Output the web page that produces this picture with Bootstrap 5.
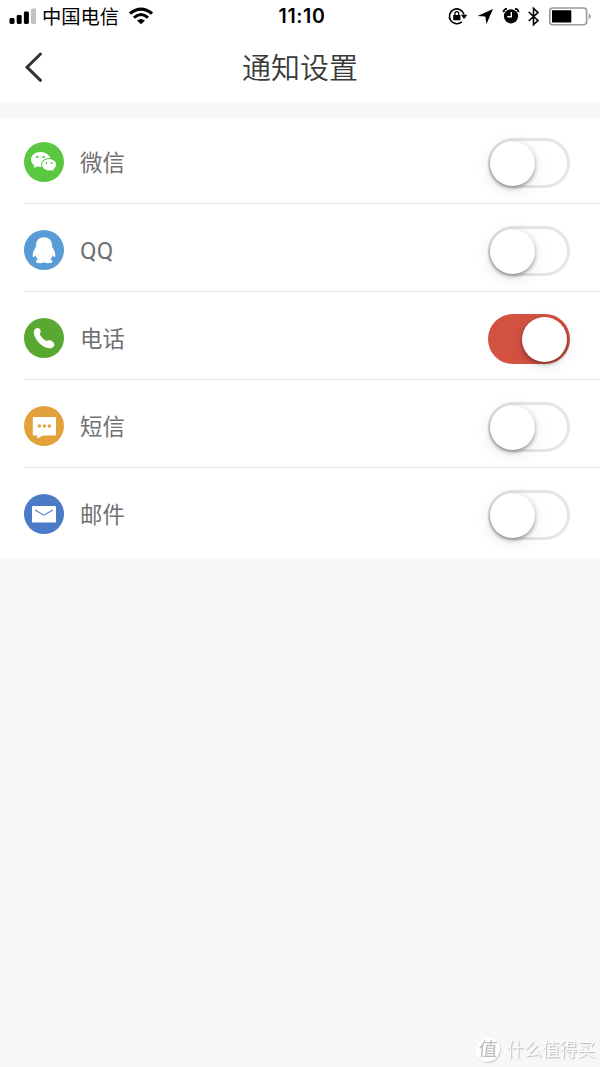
<!DOCTYPE html>
<html lang="zh-CN">
<head>
<meta charset="utf-8">
<meta name="viewport" content="width=device-width, initial-scale=1">
<title>通知设置</title>
<link href="https://cdn.jsdelivr.net/npm/bootstrap@5.3.0/dist/css/bootstrap.min.css" rel="stylesheet">
<style>
body{background:#f7f7f7;font-family:"Liberation Sans","Noto Sans CJK SC",sans-serif;color:#666}
svg{display:block;flex:none}
.status{height:33px;color:#000;padding:0 9px}
.carrier{font-size:19.3px;line-height:33px;margin-left:6px;padding-top:1px}
.clock{font:600 19.5px/33px Inter,sans-serif;letter-spacing:.6px;margin-left:4px}
.side{flex:1 1 0}
.title-bar{height:69px;color:#3a3a3a}
.title-bar h1{font-size:29px;line-height:72px;font-weight:350}
.settings{margin-top:16px}
.setting{height:88px;margin-left:24px;padding:26px 30px 0 0;border-bottom:1px solid #e4e4e4}
.setting:first-child{height:86px;padding-top:24px}
.setting:last-child{height:90px;border:0}
.setting-name{font-size:22.4px;line-height:44px;margin-left:16px;color:#707070}
.latin{font-family:Roboto,sans-serif;font-size:24px;line-height:42px;letter-spacing:.2px}
.switch{width:82px;height:50px;border:3px solid #e5e5e5;border-radius:25px;margin-top:-4px;padding:0;background:#fff;display:flex;align-items:center;flex:none}
.knob{width:45px;height:45px;border-radius:50%;background:#fff;margin-left:-1px;flex:none;box-shadow:0 2px 4px rgba(0,0,0,.38),0 4px 18px rgba(0,0,0,.09)}
.switch.on{background:#d45242;border-color:#d45242}
.on .knob{margin-left:31px}
.brand-mark{right:5px;bottom:4px;color:#fbfbfb;font-size:17.7px;line-height:26px;text-shadow:1px 1px 1px #bbb}
.brand-mark .seal{width:24px;height:24px;border-radius:50%;background:#fff;color:#bbb;font-size:19px;line-height:23px;box-shadow:1px 1px 1px #ccc;text-shadow:none;margin-right:7px;transform:skewX(-5deg)}
</style>
</head>
<body>
<header class="bg-white">
  <div class="status d-flex align-items-center">
    <div class="side d-flex align-items-center">
      <svg width="27" height="33"><rect x=".5" y="18" width="5" height="6" rx="1.400"/><rect x="7.700" y="15" width="5" height="9" rx="1.400"/><rect x="14.900" y="11.500" width="5" height="12.500" rx="1.400"/><rect x="22" y="8.500" width="5" height="15.500" rx="1.400" fill="#c2c2c2"/></svg>
      <span class="carrier">中国电信</span>
      <svg width="24" height="33" viewBox="0 0 24 33" style="margin-left:10px"><path d="M1 13.600Q12 4.500 23 13.600" fill="none" stroke="#000" stroke-width="3.200"/><path d="M4.900 17.700Q12 11.500 19.100 17.700" fill="none" stroke="#000" stroke-width="2.900"/><path d="M8 20.500Q12 17.500 16 20.500L12 24.300Z"/></svg>
    </div>
    <span class="clock">11:10</span>
    <div class="side d-flex justify-content-end">
      <svg width="144" height="33" viewBox="447 0 144 33">
        <path d="M464 14.500A7.400 7.400 0 1 0 461.800 21.800" fill="none" stroke="#000" stroke-width="1.600"/><path d="M460.900 14.700h6.400l-3.200 4.300z"/><rect x="453.200" y="15" width="7.200" height="5.200" rx=".5"/><path d="M454.900 15.500v-2a1.900 1.900 0 0 1 3.800 0v2" fill="none" stroke="#000" stroke-width="1.300"/>
        <path d="M493 9l-6.500 15-1.200-7.600-7.800-.5z"/>
        <circle cx="511" cy="16.300" r="7.100"/><path d="M503.500 12.200q.2-3 3.500-3.500M518.500 12.200q-.2-3-3.500-3.500" fill="none" stroke="#000" stroke-width="1.800"/><path d="M511.300 12v4.800H507.300" fill="none" stroke="#fff" stroke-width="1.400"/>
        <path d="M528.700 12l9.300 8.500-4.500 4.200V8.300l4.500 4.200-9.300 8.500" fill="none" stroke="#000" stroke-width="1.600"/>
        <rect x="549.800" y="8" width="36.800" height="16.800" rx="3" fill="#fff" stroke="#999" stroke-width="1.600"/><rect x="552" y="10.300" width="19.300" height="12.200" rx=".6"/><path d="M588.700 13.500q2 .7 2 2.800t-2 2.800z" fill="#999"/>
      </svg>
    </div>
  </div>
  <div class="title-bar position-relative text-center">
    <svg class="position-absolute top-0 start-0" width="60" height="69" viewBox="0 33 60 69"><path d="M40.500 54L27 67.200 40.500 80.300" fill="none" stroke="#333" stroke-width="3" stroke-linecap="round"/></svg>
    <h1 class="m-0">通知设置</h1>
  </div>
</header>
<main class="settings bg-white">
  <div class="setting d-flex align-items-start">
    <svg width="40" height="40"><circle cx="20" cy="20" r="20" fill="#5ac740"/><path d="M16.300 10c-5.300 0-9.300 3.400-9.300 7.600 0 2.500 1.300 4.500 3.400 5.900L9.700 26l3.400-1.500q3.400 1 7-.1l7-6.500c-.8-4.700-5.500-7.900-10.800-7.900z" fill="#fff"/><path d="M25 16.500c-4.200 0-7.500 2.800-7.500 6.300s3.300 6.300 7.500 6.300q1.300 0 2.500-.4l3.200 1.600-.8-2.900c1.700-1.200 2.800-2.800 2.800-4.600 0-3.500-3.400-6.300-7.700-6.300z" fill="#fff" stroke="#5ac740" stroke-width="1.100" paint-order="normal"/><g fill="#5ac740"><circle cx="13.200" cy="14.900" r="1.200"/><circle cx="19.600" cy="14.900" r="1.200"/><circle cx="22.400" cy="21" r="1"/><circle cx="27.600" cy="21" r="1"/></g></svg>
    <span class="setting-name me-auto">微信</span><button type="button" class="switch" role="switch" aria-checked="false" aria-label="微信"><span class="knob"></span></button>
  </div>
  <div class="setting d-flex align-items-start">
    <svg width="40" height="40"><circle cx="20" cy="20" r="20" fill="#599cd5"/><path d="M20 7.200c-5.200 0-8 3.600-7.900 8.100l-.5 2.200c-2.100 3-3.200 6-2.700 9.200.7 1 1.800-.3 2.600-1.500.4 1.700 1.200 3 2.300 4.200-2.500 1-2.900 3.300.2 3.700 2.500.3 5 0 5.600-.8h1c.8 1 3.500 1.100 5.800.8 2.900-.4 2.600-2.700 0-3.700 1.100-1.200 1.800-2.500 2.200-4.200 1 1.300 2 2.500 2.600 1.500.5-3.200-.7-6.400-2.800-9.200l-.4-2.200C28 10.800 25.200 7.200 20 7.200z" fill="#fff"/></svg>
    <span class="setting-name latin me-auto">QQ</span><button type="button" class="switch" role="switch" aria-checked="false" aria-label="QQ"><span class="knob"></span></button>
  </div>
  <div class="setting d-flex align-items-start">
    <svg width="40" height="40"><circle cx="20" cy="20" r="20" fill="#58a832"/><path d="M13.400 10c2.600-.1 3.400 1.700 3.200 3.900-.1 1.400-1.100 1.900-.4 3.100 1.200 2.400 3.500 4.600 6 5.800 1.200.4 1.700-.8 3-.6 2.300.2 4.400 1.600 5.100 3.900.4 1.400-.7 2.900-2.200 3.600-2.800 1.300-6.300.2-9.800-2.200-4-2.800-7.300-7.200-8.300-11.600-.6-2.800.5-5.500 3.400-5.900z" fill="#fff"/></svg>
    <span class="setting-name me-auto">电话</span><button type="button" class="switch on" role="switch" aria-checked="true" aria-label="电话"><span class="knob"></span></button>
  </div>
  <div class="setting d-flex align-items-start">
    <svg width="40" height="40"><circle cx="20" cy="20" r="20" fill="#e1a23b"/><path d="M9.800 11h21.200q1 0 1 1v16.500q0 1-1 1H19L13.300 32.500v-3H9.800q-1 0-1-1V12q0-1 1-1z" fill="#fff"/><g fill="#e1a23b"><circle cx="15.400" cy="20" r="1.700"/><circle cx="20.400" cy="20" r="1.700"/><circle cx="25.400" cy="20" r="1.700"/></g></svg>
    <span class="setting-name me-auto">短信</span><button type="button" class="switch" role="switch" aria-checked="false" aria-label="短信"><span class="knob"></span></button>
  </div>
  <div class="setting d-flex align-items-start">
    <svg width="40" height="40"><circle cx="20" cy="20" r="20" fill="#4b7bc6"/><rect x="8" y="12" width="24" height="16.500" rx="1" fill="#fff"/><path d="M11 16l8.800 5.200L29 16" fill="none" stroke="#4b7bc6" stroke-width="1.100"/></svg>
    <span class="setting-name me-auto">邮件</span><button type="button" class="switch" role="switch" aria-checked="false" aria-label="邮件"><span class="knob"></span></button>
  </div>
</main>
<div class="brand-mark position-fixed d-flex align-items-center"><span class="seal text-center">值</span><span>什么值得买</span></div>
<script src="https://cdn.jsdelivr.net/npm/bootstrap@5.3.0/dist/js/bootstrap.bundle.min.js"></script>
</body>
</html>
